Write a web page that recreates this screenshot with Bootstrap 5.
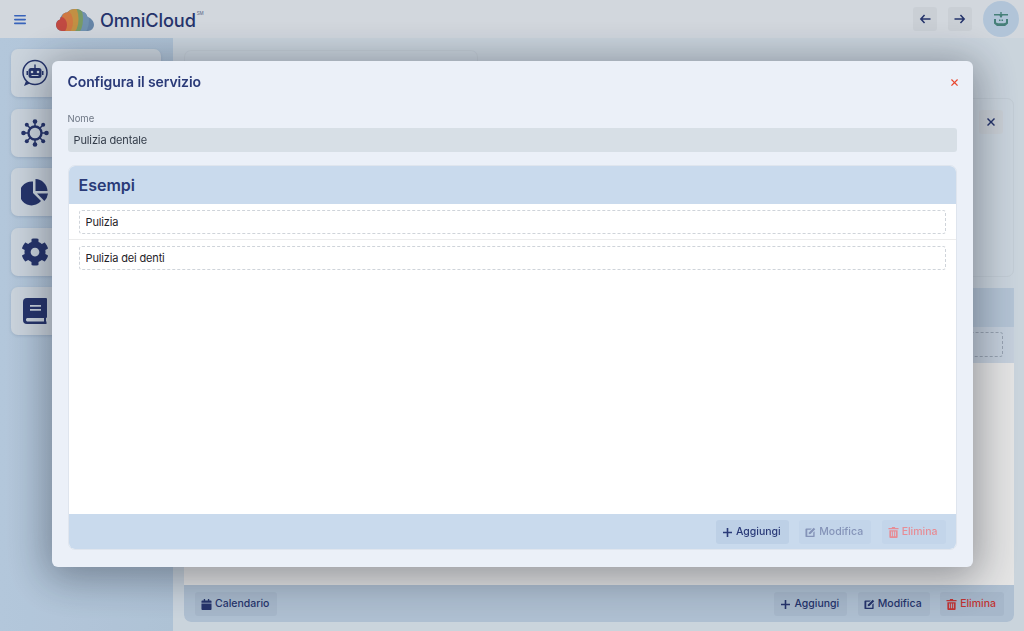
<!doctype html>
<html lang="it">
<head>
<meta charset="utf-8">
<title>OmniCloud</title>
<link href="https://cdn.jsdelivr.net/npm/bootstrap@5.3.0/dist/css/bootstrap.min.css" rel="stylesheet">
<style>
html,body{height:631px;overflow:hidden}
body{font-family:Inter,"Liberation Sans",sans-serif;font-size:11px;color:#2a3a78;background:#e2edf7}
svg{display:block;fill:currentColor}
.top-bar{height:38px;background:#ebf1f8;padding:0 5px 0 14px;flex:none}
.burger{width:13px;color:#3f6fd0}
.brand{margin-left:29px;font-size:18.200px;font-weight:500;letter-spacing:-.1px;color:#2a3a78;line-height:1;margin-top:2px}
.brand sup{font-size:4.500px;top:-6px;margin-left:1px;color:#7b86a5;position:relative}
.square{width:24px;height:24px;border-radius:3px;background:#e2e8ef;color:#2a3a78}
.avatar{width:36px;height:36px;border-radius:50%;background:#c6dcf2;color:#4f8f88}
.shell{height:593px}
.side-rail{width:173px;background:linear-gradient(90deg,#c9dff5,#c3d9ef);padding:11px 12px 0 11px;gap:11.500px;flex:none}
.rail-btn{height:48px;flex:none;border-radius:7px;background:#e3edf7;box-shadow:0 1px 3px rgba(40,60,100,.15);padding-left:10px;color:#2a3a78}
.workspace{padding:12px 10px 9px 11px;min-width:0}
.tab-stub{width:294px;height:36px;border:1px solid #dbe5ef;border-bottom:0;border-radius:7px 7px 0 0;margin-bottom:12px;flex:none}
.upper-panel{height:179px;flex:none;background:#e2edf7;border:1px solid #d9e4ee;border-radius:7px;padding:11px 10px;margin-bottom:11px}
.lower-panel{background:#fff;border-radius:0 0 7px 7px;overflow:hidden;min-height:0}
.lower-head{height:39px;background:#c9dbee;flex:none}
.lower-row{height:36px;background:#dce8f6;padding:5px 11px 6px;flex:none}
.lower-input{height:25px;border:1px dashed #a9b6c6;border-radius:3px;margin-left:auto;width:300px}
.lower-foot{height:37px;background:#c3d6ea;padding:0 10px 0 11px;flex:none;margin-top:auto}
.act{height:24px;padding:1px 8px 0 6px;border:0;border-radius:3px;font-size:10.500px;font-weight:500;color:#2a3a78;gap:3px;line-height:1}
.lower-foot .act{background:#bacde2}
.act.red{color:#d83a3a}
.act svg{width:11px;height:11px;flex:none}
.fog{background:rgba(0,0,0,.105)}
.fog .modal-dialog{max-width:921px;margin:61px auto 0}
.fog .modal-content{height:506px;background:#ebf0f8;border:0;border-radius:6px;box-shadow:0 6px 40px 6px rgba(15,20,35,.38);padding:0 16px 17px}
.fog .modal-header{height:42px;padding:0;border:0;flex:none}
.fog .modal-title{font-size:14px;font-weight:600;letter-spacing:-.1px;color:#2a3a78;line-height:1}
.close-x{color:#e8472f;width:7px;height:7px;margin-right:-1px}
.field-label{font-size:9.500px;color:#6d7684;line-height:1;margin:11px 0 4.500px;display:block}
.name-field{height:24px;border:0;border-radius:3px;background:#d7dfe6;color:#333c49;font-size:11px;letter-spacing:-.12px;padding:0 6px;box-shadow:none}
.sample-card{margin-top:13px;height:385px;background:#fff;border:1px solid #dfe5ee;border-radius:7px;overflow:hidden}
.sample-card .card-header{height:38px;flex:none;background:#c9daed;border:0;border-radius:0;padding:0 10px;font-size:16px;font-weight:600;color:#2a3a78;display:flex;align-items:center}
.sample-card .list-group-item{border-color:#ececec;padding:6px 10px 0;height:36px;background:#fff}
.sample-field{height:24px;border:1px dashed #cfd4da;border-radius:3px;background:#fff;color:#1f2329;font-size:11px;letter-spacing:-.15px;padding:0 6px;box-shadow:none}
.sample-card .card-footer{height:35px;flex:none;background:#c9daed;border:0;border-radius:0;padding:0 10px;margin-top:auto}
.sample-card .act{background:#bdd0e6}
.sample-card .act.off{background:#c3d5ea;color:#8493b8}
.sample-card .act.off.red{color:#e78c95}
.gap-foot{gap:10.500px}
</style>
</head>
<body>
<nav class="top-bar d-flex align-items-center">
  <svg class="burger" viewBox="0 0 13 11"><rect y="1" width="12" height="1.600" rx=".8"/><rect y="4.800" width="12" height="1.600" rx=".8"/><rect y="8.600" width="12" height="1.600" rx=".8"/></svg>
  <div class="brand d-flex align-items-center">
    <svg width="38" height="22" viewBox="0 0 38 22" style="margin-right:6px">
      <defs><clipPath id="cloudclip"><path d="M0 16a6 6 0 0 1 4-5.600C5 6 8 3.500 11 3.500 13 1 16 0 19 0c3 0 5 .5 7 2.500 3 .5 5 3 5.500 5.500C35 9 38 12 38 16a6 6 0 0 1-6 6H6a6 6 0 0 1-6-6z"/></clipPath></defs>
      <g clip-path="url(#cloudclip)">
        <rect width="38" height="22" fill="#7295bb"/>
        <ellipse cx="27" cy="11" rx="6" ry="13" fill="#7ea3c4"/>
        <ellipse cx="22" cy="10" rx="5" ry="13" fill="#86ad72"/>
        <ellipse cx="17" cy="10" rx="5.500" ry="13" fill="#d9a14c"/>
        <ellipse cx="11" cy="13" rx="6" ry="11" fill="#e8874a"/>
        <ellipse cx="5" cy="16" rx="6" ry="8" fill="#d8524a"/>
      </g>
    </svg>
    OmniCloud<sup>SM</sup>
  </div>
  <div class="ms-auto d-flex align-items-center" style="gap:11px">
    <span class="square d-flex align-items-center justify-content-center"><svg width="12" height="10" viewBox="0 0 12 10"><path d="M5 .5 .8 5 5 9.500l1.100-1L3.600 5.800H11.500V4.200H3.600L6.100 1.500z"/></svg></span>
    <span class="square d-flex align-items-center justify-content-center"><svg width="12" height="10" viewBox="0 0 12 10"><path d="M7 .5 11.200 5 7 9.500l-1.100-1L8.400 5.800H.5V4.200H8.400L5.900 1.500z"/></svg></span>
    <span class="avatar d-flex align-items-center justify-content-center">
      <svg width="16" height="15" viewBox="0 0 16 15"><path d="M7.300 0h1.400v2H15v1.400H9.500L8.700 5.500H7.300L6.500 3.400H1V2h6.300z"/><path d="M1 7h2v3.500l2 .8h6l2-.8V7h2v4.500L12 14H4l-3-2.500z"/><rect x="6" y="7.500" width="1.500" height="1.500"/><rect x="8.500" y="7.500" width="1.500" height="1.500"/></svg>
    </span>
  </div>
</nav>
<div class="shell d-flex">
  <aside class="side-rail d-flex flex-column">
    <div class="rail-btn d-flex align-items-center"><svg width="28" height="28" viewBox="0 0 28 28"><circle cx="14" cy="13.500" r="12" fill="none" stroke="currentColor" stroke-width="1.500"/><path d="M5 22l-2 5 6-2.500z"/><rect x="7.500" y="9" width="13" height="10" rx="2.500"/><rect x="13.300" y="5.500" width="1.400" height="4"/><rect x="5.500" y="12" width="1.500" height="4"/><rect x="21" y="12" width="1.500" height="4"/><circle cx="11" cy="13" r="1.300" fill="#e3edf7"/><circle cx="17" cy="13" r="1.300" fill="#e3edf7"/><rect x="10.500" y="16" width="7" height="1" fill="#e3edf7"/></svg></div>
    <div class="rail-btn d-flex align-items-center"><svg width="28" height="28" viewBox="0 0 28 28"><circle cx="14" cy="14" r="6.500" fill="none" stroke="currentColor" stroke-width="2.400"/><g stroke="currentColor" stroke-width="1.500"><path d="M14 2v6M14 20v6M2 14h6M20 14h6M5.500 5.500l4 4M18.500 18.500l4 4M5.500 22.500l4-4M18.500 9.500l4-4"/></g><circle cx="14" cy="2.500" r="2.300"/><circle cx="14" cy="25.500" r="2.300"/><circle cx="2.500" cy="14" r="2.300"/><circle cx="25.500" cy="14" r="2.300"/><circle cx="5.800" cy="5.800" r="2"/><circle cx="22.200" cy="22.200" r="2"/><circle cx="5.800" cy="22.200" r="2"/><circle cx="22.200" cy="5.800" r="2"/></svg></div>
    <div class="rail-btn d-flex align-items-center"><svg width="28" height="28" viewBox="0 0 28 28"><path d="M12 3.500V15l8 8A12 12 0 1 1 12 3.500z"/><path d="M14.500 1a12.500 12.500 0 0 1 12 12h-12z"/><path d="M16 15.500h11a12.500 12.500 0 0 1-3.600 7.400z"/></svg></div>
    <div class="rail-btn d-flex align-items-center"><svg width="28" height="28" viewBox="0 0 512 512"><path d="M487.4 315.7l-42.6-24.6c4.300-23.200 4.300-47 0-70.200l42.600-24.600c4.900-2.800 7.100-8.600 5.500-14-11.100-35.600-30-67.800-54.700-94.600-3.800-4.100-10-5.100-14.800-2.300L380.800 110c-17.900-15.400-38.500-27.300-60.800-35.100V25.800c0-5.600-3.900-10.500-9.400-11.700-36.700-8.200-74.300-7.800-109.200 0-5.500 1.200-9.400 6.100-9.400 11.700V75c-22.200 7.900-42.800 19.800-60.800 35.100L88.700 85.500c-4.900-2.800-11-1.900-14.800 2.300-24.700 26.700-43.600 58.900-54.700 94.600-1.700 5.400.6 11.200 5.500 14L67.300 221c-4.300 23.200-4.300 47 0 70.200l-42.600 24.600c-4.900 2.800-7.100 8.600-5.500 14 11.100 35.600 30 67.800 54.700 94.600 3.800 4.100 10 5.100 14.800 2.300l42.600-24.600c17.900 15.400 38.500 27.300 60.800 35.100v49.200c0 5.600 3.900 10.500 9.400 11.700 36.700 8.200 74.300 7.800 109.200 0 5.500-1.200 9.400-6.100 9.400-11.700v-49.200c22.200-7.900 42.800-19.800 60.800-35.100l42.600 24.600c4.900 2.800 11 1.900 14.800-2.300 24.700-26.700 43.600-58.900 54.700-94.600 1.500-5.500-.7-11.300-5.600-14.100zM256 336c-44.100 0-80-35.900-80-80s35.900-80 80-80 80 35.900 80 80-35.900 80-80 80z"/></svg></div>
    <div class="rail-btn d-flex align-items-center"><svg width="28" height="28" viewBox="0 0 28 28"><path fill-rule="evenodd" d="M6 1h19a1 1 0 0 1 1 1v18a1 1 0 0 1-1 1v3.500h.5V27H6a4 4 0 0 1-4-4V5a4 4 0 0 1 4-4zM9 8v1.800h11V8zM9 12v1.800h11V12zM6 21a2 2 0 0 0 0 3.500h17V21z"/></svg></div>
  </aside>
  <main class="workspace flex-grow-1 d-flex flex-column">
    <div class="tab-stub"></div>
    <section class="upper-panel d-flex justify-content-end">
      <span class="square d-flex align-items-center justify-content-center"><svg width="8" height="8" viewBox="0 0 8 8"><path d="M1 0 4 3 7 0l1 1-3 3 3 3-1 1-3-3-3 3-1-1 3-3-3-3z"/></svg></span>
    </section>
    <section class="lower-panel flex-grow-1 d-flex flex-column">
      <div class="lower-head"></div>
      <div class="lower-row d-flex"><div class="lower-input"></div></div>
      <div class="lower-foot d-flex align-items-center">
        <button class="act d-flex align-items-center" type="button"><svg viewBox="0 0 11 12"><path d="M2.500 0h1.500v1.500h3V0h1.500v1.500H10A1 1 0 0 1 11 2.500V4H0V2.500a1 1 0 0 1 1-1h1.500zM0 5h11v6a1 1 0 0 1-1 1H1a1 1 0 0 1-1-1z"/></svg>Calendario</button>
        <div class="ms-auto d-flex gap-foot">
          <button class="act d-flex align-items-center" type="button"><svg viewBox="0 0 11 11"><path d="M4.700 1h1.600v3.700H10v1.600H6.300V10H4.700V6.300H1V4.700h3.700z"/></svg>Aggiungi</button>
          <button class="act d-flex align-items-center" type="button"><svg viewBox="0 0 12 12"><path d="M2 1.500h5.500L6 3H2.500v6.500H9V6l1.500-1.500V10A1 1 0 0 1 9.500 11h-8a1 1 0 0 1-1-1V2.500a1 1 0 0 1 1-1z"/><path d="M9.500 .8l1.700 1.700L6 7.700l-2 .3.300-2z"/></svg>Modifica</button>
          <button class="act red d-flex align-items-center" type="button"><svg viewBox="0 0 11 12"><path d="M4 0h3l.5 1H11v1.500H0V1h3.500zM1 3.500h9V11a1 1 0 0 1-1 1H2a1 1 0 0 1-1-1zM3 5v5h1V5zM5 5v5h1V5zM7 5v5h1V5z" fill-rule="evenodd"/></svg>Elimina</button>
        </div>
      </div>
    </section>
  </main>
</div>

<div class="modal d-block fog" tabindex="-1">
  <div class="modal-dialog">
    <div class="modal-content">
      <div class="modal-header d-flex align-items-center justify-content-between">
        <h5 class="modal-title">Configura il servizio</h5>
        <svg class="close-x" viewBox="0 0 8 8"><path d="M1 0 4 3 7 0l1 1-3 3 3 3-1 1-3-3-3 3-1-1 3-3-3-3z"/></svg>
      </div>
      <label class="field-label" for="nome">Nome</label>
      <input id="nome" class="form-control name-field" value="Pulizia dentale">
      <div class="card sample-card">
        <div class="card-header">Esempi</div>
        <ul class="list-group list-group-flush border-0">
          <li class="list-group-item"><input class="form-control sample-field" value="Pulizia"></li>
          <li class="list-group-item"><input class="form-control sample-field" value="Pulizia dei denti"></li>
        </ul>
        <div class="card-footer d-flex align-items-center justify-content-end gap-foot">
          <button class="act d-flex align-items-center" type="button"><svg viewBox="0 0 11 11"><path d="M4.700 1h1.600v3.700H10v1.600H6.300V10H4.700V6.300H1V4.700h3.700z"/></svg>Aggiungi</button>
          <button class="act off d-flex align-items-center" type="button"><svg viewBox="0 0 12 12"><path d="M2 1.500h5.500L6 3H2.500v6.500H9V6l1.500-1.500V10A1 1 0 0 1 9.500 11h-8a1 1 0 0 1-1-1V2.500a1 1 0 0 1 1-1z"/><path d="M9.500 .8l1.700 1.700L6 7.700l-2 .3.300-2z"/></svg>Modifica</button>
          <button class="act off red d-flex align-items-center" type="button"><svg viewBox="0 0 11 12"><path d="M4 0h3l.5 1H11v1.500H0V1h3.500zM1 3.500h9V11a1 1 0 0 1-1 1H2a1 1 0 0 1-1-1zM3 5v5h1V5zM5 5v5h1V5zM7 5v5h1V5z" fill-rule="evenodd"/></svg>Elimina</button>
        </div>
      </div>
    </div>
  </div>
</div>
<script src="https://cdn.jsdelivr.net/npm/bootstrap@5.3.0/dist/js/bootstrap.bundle.min.js"></script>
</body>
</html>
